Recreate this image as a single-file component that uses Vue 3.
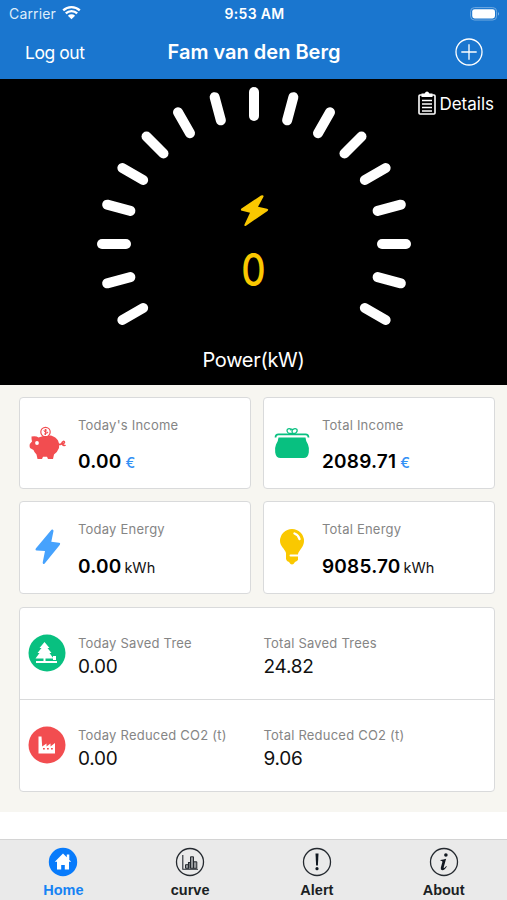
<template>
    <div class="app">
        <header class="header">
            <div class="status">
                <div class="carrier">
                    <span>Carrier</span>
                    <svg width="19" height="15" viewBox="0 0 19 15">
                        <path d="M1.2 5.4a12 12 0 0 1 16.6 0M3.8 8.4a8.2 8.2 0 0 1 11.4 0" fill="none" stroke="#fff" stroke-width="2.3" />
                        <path d="M5.9 10.7a5.2 5.2 0 0 1 7.2 0L9.5 14.2z" fill="#fff" />
                    </svg>
                </div>
                <span class="time">9:53 AM</span>
                <svg class="battery" width="30" height="14" viewBox="0 0 30 14">
                    <rect x=".6" y=".6" width="26" height="12.4" rx="3.8" fill="none" stroke="#70a9e0" stroke-width="1" />
                    <rect x="2.2" y="2.2" width="22.8" height="9.2" rx="2.4" fill="#fff" />
                    <path d="M28 4.8q1.8 2 0 4z" fill="#8fc0ee" />
                </svg>
            </div>
            <div class="nav">
                <a class="logout" href="#" @click.prevent>Log out</a>
                <h1>Fam van den Berg</h1>
                <svg class="add" width="28" height="28" viewBox="0 0 28 28" fill="none" stroke="#fff" stroke-width="1.3">
                    <circle cx="14" cy="14" r="13" />
                    <path d="M14 6.3v15.4M6.3 14h15.4" />
                </svg>
            </div>
        </header>

        <section class="gauge">
            <svg class="dial" width="507" height="305" viewBox="0 0 507 305">
                <line
                    v-for="angle in ticks" :key="angle"
                    x1="254" y1="13" x2="254" y2="37"
                    :transform="`rotate(${angle} 254 165)`"
                />
                <path class="bolt" d="M261 116.5L241.5 129.5q-1.5 1.5.5 2.3l8 2-5.5 11.7q-.6 2.2 1.5 1.2L267.5 132q1.7-1.5-.5-2.2l-9-2 5.5-10q.4-2.4-2.5-1.3z" />
            </svg>
            <a class="details" href="#" @click.prevent>
                <svg width="18" height="24" viewBox="0 0 18 24">
                    <rect x="1" y="4" width="16" height="19" rx="1" fill="none" stroke="#fff" stroke-width="1.6" />
                    <path d="M3.5 2.5h3Q9-1.5 11.5 2.5h3V6h-11z" fill="#fff" />
                    <path d="M4 9.5h10M4 13h10M4 16.5h10M4 20h10" stroke="#fff" stroke-width="1.3" />
                </svg>
                <span>Details</span>
            </a>
            <div class="power">{{ power }}</div>
            <div class="power-label">Power(kW)</div>
        </section>

        <main class="content">
            <div class="cards">
                <div class="card" v-for="card in cards" :key="card.label">
                    <div class="icon">
                        <svg v-if="card.icon === 'pig'" width="38" height="34" viewBox="0 0 38 34">
                            <path d="M2.5 10.5q4.5-1 7 1Q15 9 22 9.5q5 1.5 7 5 2 3.5 1 7.5-1.5 4-5 6.5l-1 4.5h-5l-1-2.2h-4L13 33H8.5l-1-4.5Q5 26 4.5 24l-3.500-2q-.8-2-.2-4L3 15.5q-.6-2.5-.5-5z" fill="#f24d50" />
                            <circle cx="8" cy="17" r="1.9" fill="#fff" />
                            <circle cx="16.5" cy="6" r="4.7" fill="#fff" stroke="#f24d50" stroke-width="1.2" />
                            <path d="M18 4.2q-3-1-3 .5t3 1.5-3 2M16.5 3v6" fill="none" stroke="#f24d50" stroke-width="1" />
                            <path d="M30 18.5q3 0 3.5-2.5 2-1.5 2 .5-.5 1.5-2.5 1.5 2 2.5 3.5 1" fill="none" stroke="#f24d50" stroke-width="1.5" />
                        </svg>
                        <svg v-else-if="card.icon === 'purse'" width="36" height="32" viewBox="0 0 36 32">
                            <path d="M4.5 10.5h27q.2 3.500 2.500 7 1.500 3.500.8 8Q34 31 29.500 31h-23Q2 31 1.200 25.500q-.7-4.500.8-8 2.300-3.500 2.500-7z" fill="#08c080" />
                            <path d="M1.5 10.5Q1.5 7.3 4.5 7.3h27q3 0 3 3.2" fill="none" stroke="#08c080" stroke-width="1.7" />
                            <path d="M17.3 2.6q-2-1.6-3.8-.4-1.5 2.2 1.6 4.3h6q3.1-2.200 1.600-4.300-1.800-1.200-3.800.4-1.700 1.400-.3 3M18.600 2.600q-1.700-1.200-2.200.8" fill="none" stroke="#08c080" stroke-width="1.300" />
                        </svg>
                        <svg v-else-if="card.icon === 'bolt'" width="26" height="36" viewBox="0 0 26 36">
                            <path d="M16.5.8L1 19.2q-1.3 2 .7 2.3l8.3.5-2.3 11.5q.2 2.5 2 1L24.7 16q1.2-2-.7-2.3l-7.7-1L18.5 2q0-2.2-2-1.2z" fill="#46a2fd" />
                        </svg>
                        <svg v-else width="26" height="38" viewBox="0 0 26 38">
                            <path d="M13 1a12 12 0 0 1 12 12c0 6-5 9-6 13v6q-1.5 1.5-3 2-3 5-6 0-2.5-.6-3-3v-6C6 21 1 18 1 13A12 12 0 0 1 13 1z" fill="#fac800" />
                            <path d="M15.5 5.5q4 1.5 5 5.5" fill="none" stroke="#fff" stroke-width="2.4" stroke-linecap="round" />
                            <path d="M11.5 27.5h7.5" stroke="#fff" stroke-width="2" stroke-linecap="round" />
                        </svg>
                    </div>
                    <div class="info">
                        <label>{{ card.label }}</label>
                        <div class="amount">
                            <b>{{ card.value }}</b>
                            <span :class="{ euro: card.unit === '€' }">{{ card.unit }}</span>
                        </div>
                    </div>
                </div>
            </div>

            <div class="savings">
                <div class="row" v-for="row in savings" :key="row.icon">
                    <svg v-if="row.icon === 'tree'" class="badge" width="38" height="38" viewBox="0 0 38 38">
                        <circle cx="19" cy="19" r="18.5" fill="#08c080" />
                        <path d="M16.5 8l5 6h-2l4 5h-2l4 5.5h-8V27h11.5v2H8v-2h7.5v-2.5h-8l4-5.5h-2l4-5h-2z" fill="#fff" />
                        <path d="M25 26v-4h3v4z" fill="#fff" />
                    </svg>
                    <svg v-else class="badge" width="38" height="38" viewBox="0 0 38 38">
                        <circle cx="19" cy="19" r="18.5" fill="#f24d50" />
                        <path d="M10.5 10.5h3l.7 10 4.3-3v3l4-3v3l4.5-3.5V27.5h-16.5z" fill="#fff" />
                        <path d="M15 22.8h1.8M19 22.8h1.8M23 22.8h1.8" stroke="#f24d50" stroke-width="1.5" />
                    </svg>
                    <div class="cell today">
                        <label>{{ row.todayLabel }}</label>
                        <span>{{ row.today }}</span>
                    </div>
                    <div class="cell">
                        <label>{{ row.totalLabel }}</label>
                        <span>{{ row.total }}</span>
                    </div>
                </div>
            </div>
        </main>

        <footer class="tabs">
            <a
                v-for="tab in tabs" :key="tab" href="#"
                :class="{ active: tab === current }"
                @click.prevent="current = tab"
            >
                <svg width="30" height="30" viewBox="0 0 30 30">
                    <template v-if="tab === 'Home'">
                        <circle cx="15" cy="15" r="14.2" fill="#087bfb" />
                        <path d="M15 6.5l8.2 8.3H21V22.5h-4.2v-4.500h-3.600v4.500H9v-7.700H6.800zM18.800 7.500h2.500v5h-2.500z" fill="#fff" />
                    </template>
                    <g v-else fill="none" stroke="#252a30">
                        <circle cx="15" cy="15" r="13.5" stroke-width="1.3" />
                        <g v-if="tab === 'curve'">
                            <path d="M10.5 17.7h3v3.6h-3zM15.5 9.8h3v11.5h-3zM18.5 14.8h3.3v6.5h-3.3z" fill="#96999c" stroke-width="1" />
                            <path d="M7.8 8v14.2H23M13.5 21.5v-6h1.5v6" stroke-width="1.1" />
                        </g>
                        <g v-else-if="tab === 'Alert'" fill="#111820" stroke="none">
                            <path d="M13.5 6.5h3l-.6 12h-1.8z" />
                            <circle cx="15" cy="21.7" r="1.6" />
                        </g>
                        <g v-else fill="#111820" stroke="none">
                            <circle cx="16.9" cy="8" r="1.8" />
                            <path d="M11.5 13q3-.2 5.6-1.2l-2.3 8.3q-.3 1.3.4 1 .9-.5 2-2l.6.5q-2 3.7-4.5 3.7-2-.2-1.5-2.5l1.6-5.7q.3-1.3-1.9-1.3z" />
                        </g>
                    </g>
                </svg>
                <span>{{ tab }}</span>
            </a>
        </footer>
    </div>
</template>

<script setup>
import { ref } from 'vue';

const power = ref(0);
const current = ref('Home');
const tabs = ['Home', 'curve', 'Alert', 'About'];

// 17 ticks, 15 degrees apart, starting bottom left
const ticks = Array.from({ length: 17 }, (_, i) => i * 15 - 120);

const cards = ref([
    { icon: 'pig', label: "Today's Income", value: '0.00', unit: '€' },
    { icon: 'purse', label: 'Total Income', value: '2089.71', unit: '€' },
    { icon: 'bolt', label: 'Today Energy', value: '0.00', unit: 'kWh' },
    { icon: 'bulb', label: 'Total Energy', value: '9085.70', unit: 'kWh' }
]);

const savings = ref([
    {
        icon: 'tree',
        todayLabel: 'Today Saved Tree',
        today: '0.00',
        totalLabel: 'Total Saved Trees',
        total: '24.82'
    },
    {
        icon: 'factory',
        todayLabel: 'Today Reduced CO2 (t)',
        today: '0.00',
        totalLabel: 'Total Reduced CO2 (t)',
        total: '9.06'
    }
]);
</script>

<style>
body {
    background-color: #fff;
}
</style>

<style scoped>
.app {
    display: flex;
    flex-direction: column;
    height: 900px;
    font-family: Inter, "Liberation Sans", sans-serif;
    color: #111;
    overflow: hidden;
}

.app * {
    box-sizing: border-box;
}

.app a {
    color: inherit;
    text-decoration: none;
}

.app svg {
    display: block;
    flex-shrink: 0;
}

.header {
    height: 79px;
    background-color: #1a76cf;
    color: #fff;
}

.status,
.nav {
    display: grid;
    grid-template-columns: 1fr auto 1fr;
    align-items: center;
}

.status {
    height: 27px;
    padding: 0 7px 0 9px;
}

.carrier {
    display: flex;
    align-items: center;
    gap: 6px;
    font-size: 14px;
    letter-spacing: 0.15px;
    color: #deedfa;
}

.carrier svg {
    margin-top: -3px;
}

.time {
    font-size: 14px;
    font-weight: 600;
    letter-spacing: 0.35px;
}

.battery {
    justify-self: end;
}

.nav {
    height: 50px;
    padding: 0 24px 0 25px;
}

.logout {
    font-size: 17.5px;
    letter-spacing: -0.45px;
}

.nav h1 {
    margin: 0;
    font-size: 20px;
    font-weight: 600;
}

.add {
    justify-self: end;
}

.gauge {
    position: relative;
    height: 305.5px;
    background-color: #000;
    color: #fff;
}

.dial line {
    stroke: #fff;
    stroke-width: 10;
    stroke-linecap: round;
}

.dial .bolt {
    fill: #fac800;
}

.gauge .details {
    position: absolute;
    top: 12px;
    right: 13px;
    display: flex;
    align-items: center;
    gap: 3px;
    font-size: 17px;
}

.details span {
    padding-top: 1px;
}

.power,
.power-label {
    position: absolute;
    left: 0;
    width: 507px;
    text-align: center;
}

.power {
    top: 164px;
    font-size: 45px;
    line-height: 54px;
    font-weight: 500;
    color: #fac800;
    transform: scaleX(0.84);
}

.power-label {
    top: 269px;
    font-size: 20px;
    line-height: 24px;
    letter-spacing: -0.3px;
}

.content {
    height: 427.5px;
    padding: 12px 12px 0 19px;
    background-color: #f7f6f1;
}

.cards {
    display: grid;
    grid-template-columns: 232px 232px;
    gap: 12px;
}

.card,
.savings {
    background-color: #fff;
    border: 1px solid #d9dadb;
    border-radius: 4px;
}

.card {
    display: flex;
    height: 92.5px;
}

.icon {
    display: flex;
    align-items: center;
    justify-content: center;
    width: 55px;
}

.info {
    padding: 18px 0 0 3px;
}

label {
    display: block;
    font-size: 13px;
    line-height: 18px;
    letter-spacing: 0.22px;
    color: #858585;
}

.amount {
    display: flex;
    align-items: baseline;
    gap: 3px;
    margin-top: 16.5px;
    font-size: 14.5px;
    line-height: 24px;
}

.amount b {
    font-size: 19px;
    font-weight: 600;
    letter-spacing: 0.2px;
    color: #000;
}

.amount .euro {
    padding-left: 1px;
    font-weight: 500;
    color: #3390f5;
}

.savings {
    margin-top: 13px;
}

.row {
    display: flex;
    align-items: center;
    height: 91px;
    padding-left: 8px;
}

.row + .row {
    height: 92px;
    border-top: 1px solid #d9dadb;
}

.badge {
    margin-bottom: 1px;
}

.cell {
    padding-top: 8px;
}

.cell.today {
    width: 185.5px;
    margin-left: 12px;
}

.cell span {
    display: block;
    font-size: 19px;
    line-height: 29px;
    letter-spacing: -0.25px;
}

.tabs {
    display: grid;
    grid-template-columns: repeat(4, 1fr);
    height: 61px;
    margin-top: 27px;
    border-top: 1px solid #d4d4d4;
    background-color: #eaeaea;
}

.tabs a {
    display: flex;
    flex-direction: column;
    align-items: center;
    padding-top: 7px;
    font: bold 14.5px/17px "Liberation Sans", Arial, sans-serif;
    color: #1b1f24;
}

.tabs a.active {
    color: #1683f4;
}

.tabs span {
    margin-top: 5px;
}
</style>
